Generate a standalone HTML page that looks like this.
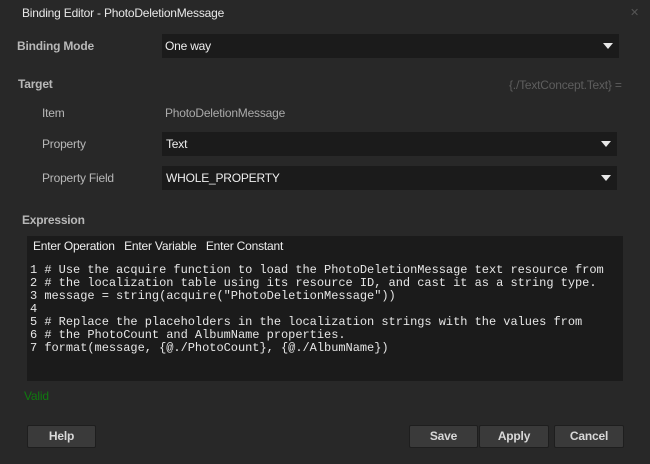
<!DOCTYPE html>
<html><head><style>
*{margin:0;padding:0;box-sizing:border-box}
body{width:650px;height:464px;background:#282828;font-family:"Liberation Sans",sans-serif;font-size:12px;color:#d8d8d8;position:relative;overflow:hidden;letter-spacing:-0.2px}
.a{position:absolute;white-space:pre}
.box{position:absolute;background:#1b1b1b;height:24px}
.tri{position:absolute;right:6px;top:9px;width:0;height:0;border-left:5px solid transparent;border-right:5px solid transparent;border-top:6px solid #e8e8e8}
.lbl{color:#b8b8b8}
.btn{position:absolute;top:425px;height:23px;background:#3a3a3a;border:1px solid #1e1e1e;border-radius:2px;color:#d8d8d8;text-align:center;line-height:21px;font-weight:bold}
.code{position:absolute;left:30px;top:264px;font-family:"Liberation Mono",monospace;font-size:12px;line-height:13px;color:#e6e6e6;white-space:pre;letter-spacing:-0.03px}
</style></head><body>
<div class="a" style="left:22px;top:6px;color:#e8e8e8">Binding Editor - PhotoDeletionMessage</div>
<div class="a" style="left:630px;top:6px;color:#555;font-size:11px">✕</div>
<div class="a lbl" style="left:17px;top:39px;font-weight:bold">Binding Mode</div>
<div class="box" style="left:162px;top:34px;width:457px"><span class="a" style="left:3px;top:5px;color:#eee">One way</span><div class="tri"></div></div>
<div class="a lbl" style="left:18px;top:77px;font-weight:bold">Target</div>
<div class="a" style="left:509px;top:78px;color:#5e5e5e">{./TextConcept.Text} =</div>
<div class="a lbl" style="left:42px;top:106px">Item</div>
<div class="a" style="left:165px;top:106px;color:#aaa">PhotoDeletionMessage</div>
<div class="a lbl" style="left:42px;top:137px">Property</div>
<div class="box" style="left:162px;top:132px;width:455px"><span class="a" style="left:4px;top:5px;color:#eee">Text</span><div class="tri"></div></div>
<div class="a lbl" style="left:42px;top:171px">Property Field</div>
<div class="box" style="left:162px;top:166px;width:455px"><span class="a" style="left:4px;top:5px;color:#eee">WHOLE_PROPERTY</span><div class="tri"></div></div>
<div class="a lbl" style="left:22px;top:213px;font-weight:bold">Expression</div>
<div style="position:absolute;left:27px;top:236px;width:596px;height:145px;background:#1b1b1b"></div>
<div class="a" style="left:33px;top:239px;color:#eee">Enter Operation&nbsp;&nbsp;&nbsp;Enter Variable&nbsp;&nbsp;&nbsp;Enter Constant</div>
<div class="code">1 # Use the acquire function to load the PhotoDeletionMessage text resource from
2 # the localization table using its resource ID, and cast it as a string type.
3 message = string(acquire("PhotoDeletionMessage"))
4
5 # Replace the placeholders in the localization strings with the values from
6 # the PhotoCount and AlbumName properties.
7 format(message, {@./PhotoCount}, {@./AlbumName})</div>
<div class="a" style="left:24px;top:389px;color:#0f7a0f">Valid</div>
<div class="btn" style="left:27px;width:69px">Help</div>
<div class="btn" style="left:409px;width:69px">Save</div>
<div class="btn" style="left:479px;width:70px">Apply</div>
<div class="btn" style="left:554px;width:70px">Cancel</div>
</body></html>
